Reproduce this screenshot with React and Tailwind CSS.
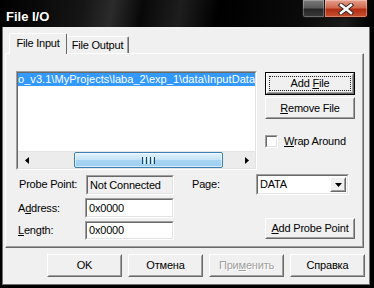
import React from 'react';

function Raised({ className = '', children }) {
    return (
        <div className={`border border-t-white border-l-white border-r-[#696969] border-b-[#696969] bg-[#f0f0f0] ${className}`}>
            <div className="h-full border border-t-[#f0f0f0] border-l-[#f0f0f0] border-r-[#a0a0a0] border-b-[#a0a0a0] flex items-center justify-center">
                {children}
            </div>
        </div>
    );
}

function Sunken({ className = '', inner = '', children }) {
    return (
        <div className={`border border-t-[#a0a0a0] border-l-[#a0a0a0] border-r-white border-b-white ${className}`}>
            <div className={`h-full border border-t-[#696969] border-l-[#696969] border-r-[#e3e3e3] border-b-[#e3e3e3] ${inner}`}>
                {children}
            </div>
        </div>
    );
}

function Button({ children, className = '', isDefault = false, disabled = false }) {
    const label = (
        <span className={disabled ? 'text-[#a0a0a0] [text-shadow:1px_1px_0_#fff]' : ''}>{children}</span>
    );
    if (isDefault) {
        return (
            <div className={`border border-black ${className}`}>
                <Raised className="h-full">
                    <div className="w-[82px] h-[15px] border border-dotted border-[#202020] flex items-center justify-center">
                        {label}
                    </div>
                </Raised>
            </div>
        );
    }
    return <Raised className={className}>{label}</Raised>;
}

function Arrow({ dir }) {
    return (
        <svg width="4" height="7" viewBox="0 0 4 7">
            {dir === 'left' ? <path d="M4 0 L0 3.5 L4 7 Z" fill="#000" /> : <path d="M0 0 L4 3.5 L0 7 Z" fill="#000" />}
        </svg>
    );
}

export default function App() {
    return (
        <div className="w-[374px] h-[288px] bg-black flex flex-col overflow-hidden font-['Liberation_Sans',Arial,sans-serif] text-[11px] tracking-[-0.2px] text-black select-none">
            {/* title bar */}
            <div className="h-[27px] flex shrink-0 bg-[linear-gradient(100deg,#000_0%,#151515_22%,#2b2b2b_30%,#080808_38%,#1e1e1e_48%,#000_58%,#0a0a0a_80%,#1a1a1a_92%,#000_100%)]">
                <div className="flex-1 pl-[6px] pt-[9px] text-[13px] leading-[15px] font-bold tracking-normal text-white [text-shadow:0_0_3px_#000]">
                    File I/O
                </div>
                <div className="flex items-start pr-[6px]">
                    <div className="w-[23px] h-[18px] border border-[#1a1a1a] border-t-0 rounded-bl-[3px] bg-[linear-gradient(#7c7c7c,#5a5a5a_45%,#262626_55%,#3a3a3a)] shadow-[inset_0_0_0_1px_rgba(255,255,255,0.25)]" />
                    <div className="w-[43px] h-[18px] border border-[#2a0a05] border-t-0 border-l-0 rounded-br-[3px] flex items-center justify-center bg-[linear-gradient(#e6a08c,#cf6a50_45%,#b22e14_55%,#c9502f)] shadow-[inset_0_0_0_1px_rgba(255,255,255,0.3)]">
                        <svg width="16" height="12" viewBox="0 0 16 12">
                            <path d="M3 2 L13 10 M13 2 L3 10" stroke="#3a2a28" strokeWidth="4.5" strokeLinecap="square" />
                            <path d="M3 2 L13 10 M13 2 L3 10" stroke="#fff" strokeWidth="2.4" strokeLinecap="square" />
                        </svg>
                    </div>
                </div>
            </div>

            {/* frame + client */}
            <div className="flex-1 pl-[2px] pr-[4px] pb-[3px]">
                <div className="h-full border-l border-r border-b border-[#707070] bg-[#f0f0f0] flex flex-col">
                    {/* tabs */}
                    <div className="h-[20px] mt-[6px] pl-[6px] flex items-end shrink-0">
                        <div className="relative z-10 -mb-px w-[58px] h-[21px] bg-[#f0f0f0] border-t border-l border-r border-t-white border-l-white border-r-[#696969] rounded-t-[2px] flex items-center justify-center pb-[1px]">
                            File Input
                        </div>
                        <div className="w-[62px] h-[17px] bg-[#f0f0f0] border-t border-r border-t-white border-r-[#696969] shadow-[inset_-1px_0_0_#a0a0a0] rounded-tr-[2px] flex items-center justify-center">
                            File Output
                        </div>
                    </div>

                    {/* tab panel */}
                    <div className="ml-[2px] w-[359px] h-[195px] shrink-0 border border-t-white border-l-white border-r-[#696969] border-b-[#696969]">
                        <div className="h-full border-r border-b border-r-[#a0a0a0] border-b-[#a0a0a0] pt-[17px] pl-[10px]">
                            <div className="flex gap-[8px]">
                                <Sunken className="w-[241px] h-[99px]" inner="bg-white flex flex-col">
                                    <div className="flex-1 overflow-hidden">
                                        <div className="h-[13px] leading-[13px] bg-[#3399ff] text-white whitespace-nowrap overflow-hidden tracking-[0.05px]">
                                            o_v3.1\MyProjects\laba_2\exp_1\data\InputData
                                        </div>
                                    </div>
                                    <div className="h-[17px] flex bg-[#ececec] border-t border-[#e4e4e4]">
                                        <div className="w-[17px] flex items-center justify-center"><Arrow dir="left" /></div>
                                        <div className="w-[39px]" />
                                        <div className="w-[149px] rounded-[2px] border border-[#3c7fb1] bg-[linear-gradient(#e3f2fd,#c4e2f8_50%,#a9d5f4_52%,#9ccdf0)] shadow-[inset_0_0_0_1px_rgba(255,255,255,0.6)] flex items-center justify-center gap-[1px]">
                                            <div className="w-[1px] h-[7px] bg-[#183f5c]" />
                                            <div className="w-[1px] h-[7px] bg-[#e8f4fc]" />
                                            <div className="w-[1px] h-[7px] bg-[#183f5c]" />
                                            <div className="w-[1px] h-[7px] bg-[#e8f4fc]" />
                                            <div className="w-[1px] h-[7px] bg-[#183f5c]" />
                                            <div className="w-[1px] h-[7px] bg-[#e8f4fc]" />
                                            <div className="w-[1px] h-[7px] bg-[#183f5c]" />
                                        </div>
                                        <div className="flex-1" />
                                        <div className="w-[17px] flex items-center justify-center"><Arrow dir="right" /></div>
                                    </div>
                                </Sunken>

                                <div className="w-[90px] pt-[1px] flex flex-col">
                                    <Button isDefault className="h-[23px]">
                                        Add <u>F</u>ile
                                    </Button>
                                    <Button className="h-[22px] mt-[2px]">
                                        <u>R</u>emove File
                                    </Button>
                                    <div className="mt-[16px] flex items-center gap-[6px] h-[13px]">
                                        <Sunken className="w-[13px] h-[13px]" inner="bg-white" />
                                        <span><u>W</u>rap Around</span>
                                    </div>
                                </div>
                            </div>

                            {/* probe section */}
                            <div className="mt-[4px] flex items-center h-[21px]">
                                <div className="w-[70px] pl-[3px]">Probe Point:</div>
                                <Sunken className="w-[88px] h-[20px]" inner="bg-[#f0f0f0] pl-[2px] leading-[16px]">
                                    Not Connected
                                </Sunken>
                                <div className="ml-[18px] w-[64px]">Page:</div>
                                <Sunken className="w-[93px] h-[21px]" inner="bg-white flex items-center pl-[2px] pr-[1px]">
                                    <span className="flex-1">DATA</span>
                                    <Raised className="w-[16px] h-[15px]">
                                        <svg width="7" height="4" viewBox="0 0 7 4">
                                            <path d="M0 0 L7 0 L3.5 4 Z" fill="#000" />
                                        </svg>
                                    </Raised>
                                </Sunken>
                            </div>
                            <div className="mt-[3px] flex items-center h-[20px]">
                                <div className="w-[69px] pl-[2px]">A<u>d</u>dress:</div>
                                <Sunken className="w-[89px] h-[20px]" inner="bg-white pl-[2px] leading-[16px]">
                                    0x0000
                                </Sunken>
                            </div>
                            <div className="flex items-start">
                                <div className="w-[69px] pl-[2px] mt-[3px] leading-[19px]"><u>L</u>ength:</div>
                                <Sunken className="w-[89px] h-[19px] mt-[3px]" inner="bg-white pl-[2px] leading-[15px]">
                                    0x0000
                                </Sunken>
                                <Button className="ml-[91px] w-[90px] h-[21px]">
                                    <u>A</u>dd Probe Point
                                </Button>
                            </div>
                        </div>
                    </div>

                    {/* dialog buttons */}
                    <div className="mt-[6px] pl-[44px] flex gap-[6px]">
                        <Button className="w-[75px] h-[23px]">OK</Button>
                        <Button className="w-[75px] h-[23px]">Отмена</Button>
                        <Button disabled className="w-[75px] h-[23px]">При<u>м</u>енить</Button>
                        <Button className="w-[75px] h-[23px]">Справка</Button>
                    </div>
                </div>
            </div>
        </div>
    );
}
